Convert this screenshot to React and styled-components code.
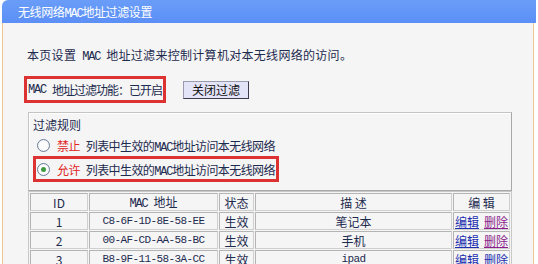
import React from "react";
import styled, { createGlobalStyle } from "styled-components";

const Global = createGlobalStyle`
  html, body { margin: 0; padding: 0; background: #ffffff; }
  body { font-family: "Noto Sans CJK SC", "Noto Sans", sans-serif; font-size: 12px; color: #1d2b4f; }
`;

const Frame = styled.div`
  width: 538px;
  height: 264px;
  overflow: hidden;
  display: flex;
  flex-direction: column;
`;

const TitleBar = styled.div`
  margin-left: 2px;
  width: 534px;
  height: 23px;
  box-sizing: border-box;
  padding-left: 16px;
  border-radius: 6px 0 0 0;
  background: linear-gradient(#6a9df8, #5b8ff6);
  color: #ffffff;
  font-size: 12px;
  line-height: 23px;
  letter-spacing: -0.4px;
  white-space: nowrap;
`;

const Ascii = styled.span`
  font-family: "Liberation Mono", "DejaVu Sans Mono", monospace;
  font-size: 12px;
  line-height: 1;
  letter-spacing: -1.2px;
  margin-left: ${(p) => p.$gap || 0}px;
  margin-right: ${(p) => p.$gapR ?? p.$gap ?? 0}px;
`;

const Body = styled.div`
  flex: 1;
  margin-left: 2px;
  width: 532px;
  box-sizing: border-box;
  border-left: 1px solid #f1c68c;
  border-right: 1px solid #f1c68c;
  background: #f5f5f5;
  padding: 24px 0 0 24px;
  display: flex;
  flex-direction: column;
`;

const Intro = styled.div`
  height: 16px;
  line-height: 16px;
  white-space: nowrap;
  letter-spacing: 0.3px;
`;

const StatusRow = styled.div`
  margin-top: 13px;
  margin-left: -3px;
  display: flex;
  align-items: center;
  gap: 17px;
`;

const Highlight = styled.div`
  border: 3px solid #dc3232;
  box-sizing: border-box;
  height: ${(p) => p.$h || 27}px;
  width: ${(p) => p.$w}px;
  display: flex;
  align-items: center;
  padding-left: ${(p) => p.$pl || 1}px;
  white-space: nowrap;
  letter-spacing: ${(p) => p.$ls || 0}px;
`;

const Button = styled.button`
  height: 18px;
  width: 66px;
  padding: 0;
  background: #e4e4f8;
  border: 1px solid #3c3c4c;
  border-top-color: #9a9ab0;
  border-left-color: #9a9ab0;
  font-family: "Noto Sans CJK SC", sans-serif;
  font-size: 12px;
  line-height: 16px;
  color: #111;
`;

const Rules = styled.div`
  margin-top: 9px;
  margin-left: 1px;
  width: 484px;
  height: 79px;
  box-sizing: border-box;
  border: 1px solid #c4c4c4;
  border-right-color: #a8a8a8;
  border-bottom-color: #a8a8a8;
  box-shadow: inset 1px 1px 0 #ffffff;
  padding: 4px 0 0 4px;
  display: flex;
  flex-direction: column;
`;

const RulesTitle = styled.div`
  line-height: 16px;
`;

const RadioLine = styled.div`
  display: flex;
  align-items: center;
  height: 22px;
  padding-left: ${(p) => p.$pl || 0}px;
  margin-top: ${(p) => p.$mt || 0}px;
  white-space: nowrap;
  letter-spacing: -0.6px;
`;

const Radio = styled.span`
  width: 11px;
  height: 11px;
  border-radius: 50%;
  border: 1px solid #6b7d99;
  background: radial-gradient(circle, #ffffff 40%, #e6eaf0 100%);
  display: inline-flex;
  align-items: center;
  justify-content: center;
  margin-right: 7px;
  &::after {
    content: "";
    width: 5px;
    height: 5px;
    border-radius: 50%;
    background: ${(p) => (p.$checked ? "#3f9a3f" : "transparent")};
  }
`;

const Key = styled.span`
  color: #e0251f;
  margin-right: 6px;
`;

const Table = styled.table`
  margin-top: 0;
  margin-left: 1px;
  width: 484px;
  border-collapse: separate;
  border-spacing: 1px;
  border: 1px solid #c8c8c8;
  table-layout: fixed;
`;

const Th = styled.th`
  font-weight: normal;
  height: 16px;
  padding: 0;
  border: 1px solid #cfcfcf;
  border-top-color: #b4b4b4;
  border-left-color: #b4b4b4;
  line-height: 15px;
  text-align: center;
  color: #1d2b4f;
  white-space: nowrap;
`;

const Td = styled.td`
  height: 16px;
  padding: 0;
  border: 1px solid #cfcfcf;
  border-top-color: #b4b4b4;
  border-left-color: #b4b4b4;
  line-height: 15px;
  text-align: center;
  color: #1d2b4f;
  white-space: nowrap;
  font-family: ${(p) => (p.$mono ? '"Liberation Mono", monospace' : "inherit")};
  font-size: ${(p) => (p.$mono ? "11px" : "12px")};
  letter-spacing: ${(p) => (p.$mono ? "-0.6px" : "0")};
`;

const Link = styled.a`
  color: ${(p) => (p.$visited ? "#8a1e8c" : "#1c2fb0")};
  text-decoration: underline;
  margin-right: ${(p) => p.$mr || 0}px;
`;

const rows = [
  { id: 1, mac: "C8-6F-1D-8E-58-EE", st: "生效", desc: "笔记本", del: true },
  { id: 2, mac: "00-AF-CD-AA-58-BC", st: "生效", desc: "手机", del: true },
  { id: 3, mac: "B8-9F-11-58-3A-CC", st: "生效", desc: "ipad", mono: true, del: false },
];

export default function App() {
  return (
    <Frame>
      <Global />
      <TitleBar>
        无线网络<Ascii>MAC</Ascii>地址过滤设置
      </TitleBar>
      <Body>
        <Intro>
          本页设置<Ascii $gap={6}>MAC</Ascii>地址过滤来控制计算机对本无线网络的访问。
        </Intro>
        <StatusRow>
          <Highlight $w={142} $ls={-1}>
            <Ascii $gapR={6}>MAC</Ascii>地址过滤功能：已开启
          </Highlight>
          <Button>关闭过滤</Button>
        </StatusRow>
        <Rules>
          <RulesTitle>过滤规则</RulesTitle>
          <RadioLine $pl={4} $mt={1}>
            <Radio />
            <Key>禁止</Key>
            <span>
              列表中生效的<Ascii>MAC</Ascii>地址访问本无线网络
            </span>
          </RadioLine>
          <Highlight $w={246} $h={26} $pl={1}>
            <RadioLine>
              <Radio $checked />
              <Key>允许</Key>
              <span>
                列表中生效的<Ascii>MAC</Ascii>地址访问本无线网络
              </span>
            </RadioLine>
          </Highlight>
        </Rules>
        <Table>
          <colgroup>
            <col style={{ width: 58 }} />
            <col style={{ width: 129 }} />
            <col style={{ width: 35 }} />
            <col style={{ width: 197 }} />
            <col style={{ width: 57 }} />
          </colgroup>
          <thead>
            <tr>
              <Th>ID</Th>
              <Th>
                <Ascii $gap={0} $gapR={6}>MAC</Ascii>地址
              </Th>
              <Th>状态</Th>
              <Th>描 述</Th>
              <Th>编 辑</Th>
            </tr>
          </thead>
          <tbody>
            {rows.map((r) => (
              <tr key={r.id}>
                <Td>{r.id}</Td>
                <Td $mono>{r.mac}</Td>
                <Td>{r.st}</Td>
                <Td $mono={r.mono}>{r.desc}</Td>
                <Td>
                  <Link href="#" $mr={5}>编辑</Link>
                  <Link href="#" $visited={r.del}>删除</Link>
                </Td>
              </tr>
            ))}
          </tbody>
        </Table>
      </Body>
    </Frame>
  );
}
